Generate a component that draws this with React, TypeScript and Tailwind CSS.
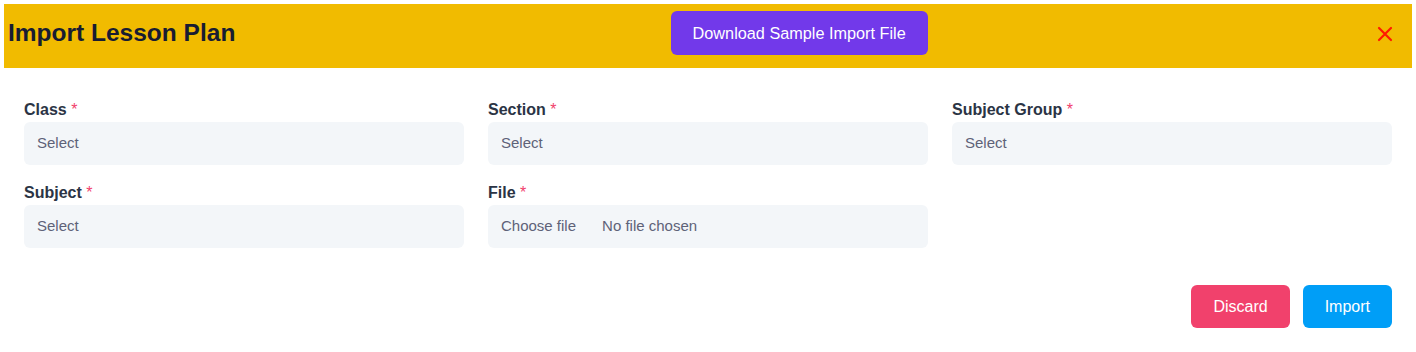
import React from 'react';

const font = { fontFamily: '"Liberation Sans", Arial, sans-serif' };

function Label({ text }: { text: string }) {
  return (
    <label className="mb-[2px] block h-5 text-[16px] leading-5 font-bold text-[#2b3445]">
      {text} <span className="text-[#f1416c] font-normal">*</span>
    </label>
  );
}

function SelectField({ label }: { label: string }) {
  return (
    <div className="flex flex-col">
      <Label text={label} />
      <div className="flex h-[43px] items-center rounded-md bg-[#f3f6f9] px-[13px] text-[15px] text-[#5e6278]">
        Select
      </div>
    </div>
  );
}

function FileField() {
  return (
    <div className="flex flex-col">
      <Label text="File" />
      <div className="flex h-[43px] items-center rounded-md bg-[#f3f6f9] px-[13px] text-[15px] text-[#5e6278]">
        <span className="mr-[26px]">Choose file</span>
        <span>No file chosen</span>
      </div>
    </div>
  );
}

export default function App() {
  return (
    <div className="h-[352px] w-[1416px] bg-white p-1" style={font}>
      {/* Header */}
      <div className="flex h-16 items-center justify-between bg-[#f1bb00] pl-[4px] pr-[19px] pb-[6px]">
        <h1 className="text-[24.5px] font-bold text-[#181c32]">Import Lesson Plan</h1>
        <button className="mr-[14px] h-[44px] rounded-md bg-[#7239ea] px-[22px] text-[16.25px] text-white">
          Download Sample Import File
        </button>
        <svg width="16" height="16" viewBox="0 0 16 16" className="mt-[2px]">
          <path d="M2 2 L14 14 M14 2 L2 14" stroke="#ff1a00" strokeWidth="2.2" strokeLinecap="round" />
        </svg>
      </div>

      {/* Form */}
      <div className="px-5 pt-[32px]">
        <div className="grid grid-cols-3 gap-x-6 gap-y-[18px]">
          <SelectField label="Class" />
          <SelectField label="Section" />
          <SelectField label="Subject Group" />
          <SelectField label="Subject" />
          <FileField />
        </div>
        <div className="mt-[37px] flex justify-end gap-[13px]">
          <button className="h-[43px] rounded-md bg-[#f1416c] px-[22px] text-[16px] text-white">Discard</button>
          <button className="h-[43px] rounded-md bg-[#009ef7] px-[22px] text-[16px] text-white">Import</button>
        </div>
      </div>
    </div>
  );
}
